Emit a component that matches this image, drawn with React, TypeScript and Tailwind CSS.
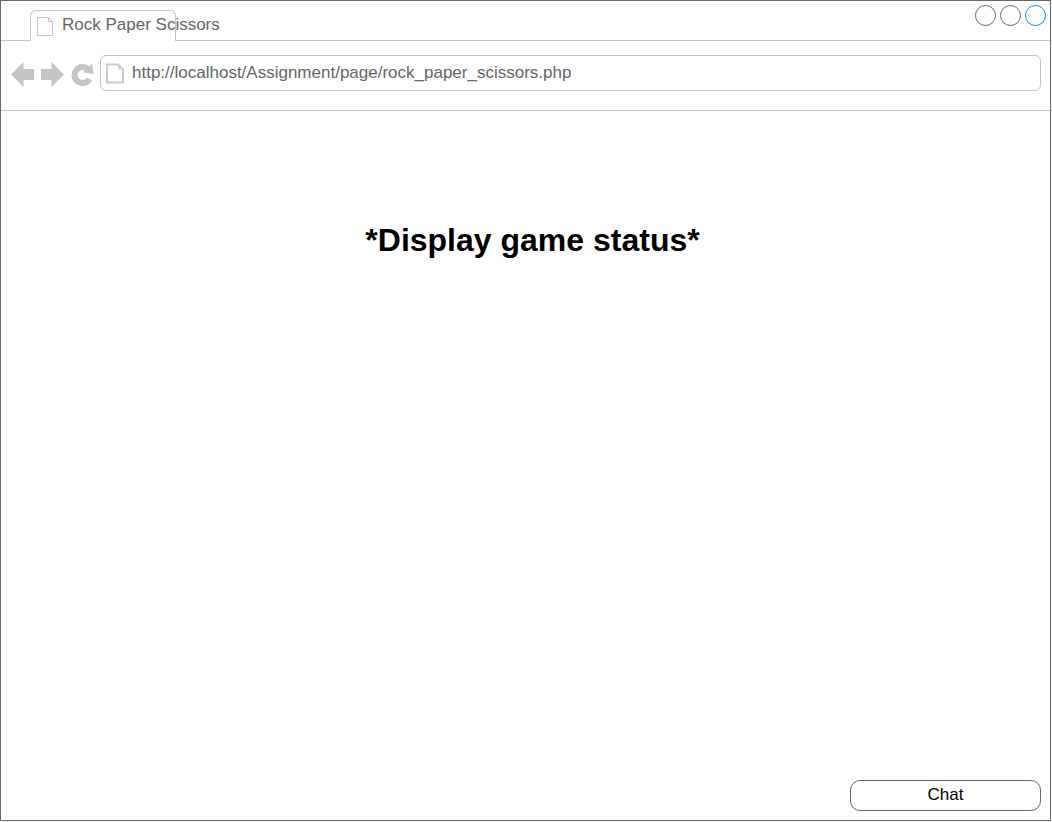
import { useState } from "react";

const URL = "http://localhost/Assignment/page/rock_paper_scissors.php";

function TabPageIcon() {
  return (
    <svg width="17" height="20" viewBox="0 0 17 20" fill="none" stroke="#c4c4c4" aria-hidden="true">
      <path d="M0.5 0.5H11.5L15.5 4.5V18.5H0.5Z" />
      <path d="M11.5 0.5V4.5H15.5" />
    </svg>
  );
}

function AddressPageIcon() {
  return (
    <svg width="18" height="21" viewBox="0 0 18 21" fill="none" stroke="#cbcbcb" aria-hidden="true">
      <path d="M1 1.5H12L17 6.5V19.5H1Z" strokeWidth="2" />
      <path d="M12.5 1.5V6H17" />
    </svg>
  );
}

function BackIcon() {
  return (
    <svg width="23" height="25" viewBox="0 0 23 25" fill="#c4c4c4" aria-hidden="true">
      <path d="M0 12.5L12.5 0V7H23V18H12.5V25Z" />
    </svg>
  );
}

function ForwardIcon() {
  return (
    <svg width="23" height="25" viewBox="0 0 23 25" fill="#c4c4c4" aria-hidden="true">
      <path d="M23 12.5L10.5 0V7H0V18H10.5V25Z" />
    </svg>
  );
}

function ReloadIcon() {
  return (
    <svg width="24" height="23" viewBox="0 0 24 23" aria-hidden="true">
      <path d="M17.2 6.3A8 8 0 1 0 18.5 15.9" fill="none" stroke="#c4c4c4" strokeWidth="6" />
      <path d="M21 0.5L22.5 11L12 9.3Z" fill="#c4c4c4" />
    </svg>
  );
}

export default function App() {
  const [address, setAddress] = useState(URL);

  return (
    <div className="flex min-h-screen bg-white pr-px pb-px font-['Liberation_Sans',Arial,sans-serif] text-[17px] leading-5 text-[#666666]">
      <div className="flex min-w-0 flex-1 flex-col border border-[#666666]">
        <header>
          <div className="flex h-10">
            <div className="w-[29px] border-b border-[#c4c4c4]" />
            <div className="mt-[9px] flex w-[146px] gap-2 rounded-t-md border-x border-t border-[#c4c4c4] pt-1.5 pl-1.5 whitespace-nowrap">
              <span className="shrink-0">
                <TabPageIcon />
              </span>
              <span className="-mt-0.5">Rock Paper Scissors</span>
            </div>
            <div className="flex flex-1 justify-end gap-1 border-b border-[#c4c4c4] pt-1 pr-1">
              <button type="button" aria-label="Minimize" className="size-[21px] rounded-full border border-[#666666]" />
              <button type="button" aria-label="Maximize" className="size-[21px] rounded-full border border-[#666666]" />
              <button type="button" aria-label="Close" className="size-[21px] rounded-full border border-[#008cff]" />
            </div>
          </div>
          <nav className="flex items-start border-b border-[#c4c4c4] pt-3.5 pr-[9px] pb-[19px] pl-2.5">
            <div className="flex w-[89px] items-center gap-[7px] pt-[7px]">
              <button type="button" aria-label="Back">
                <BackIcon />
              </button>
              <button type="button" aria-label="Forward">
                <ForwardIcon />
              </button>
              <button type="button" aria-label="Reload">
                <ReloadIcon />
              </button>
            </div>
            <div className="flex h-9 min-w-0 flex-1 items-center gap-2 rounded-md border border-[#c4c4c4] px-[5px]">
              <AddressPageIcon />
              <input
                type="text"
                aria-label="Address"
                value={address}
                onChange={(event) => setAddress(event.target.value)}
                className="min-w-0 flex-1 bg-transparent outline-none"
              />
            </div>
          </nav>
        </header>
        <main className="flex flex-1 flex-col text-black">
          <h1 className="pt-[109px] pl-3.5 text-center text-[32px] leading-10 font-bold">*Display game status*</h1>
          <div className="mt-auto flex justify-end p-[9px]">
            <button type="button" className="h-[31px] w-[191px] rounded-[10px] border border-[#666666] pb-0.5">
              Chat
            </button>
          </div>
        </main>
      </div>
    </div>
  );
}
